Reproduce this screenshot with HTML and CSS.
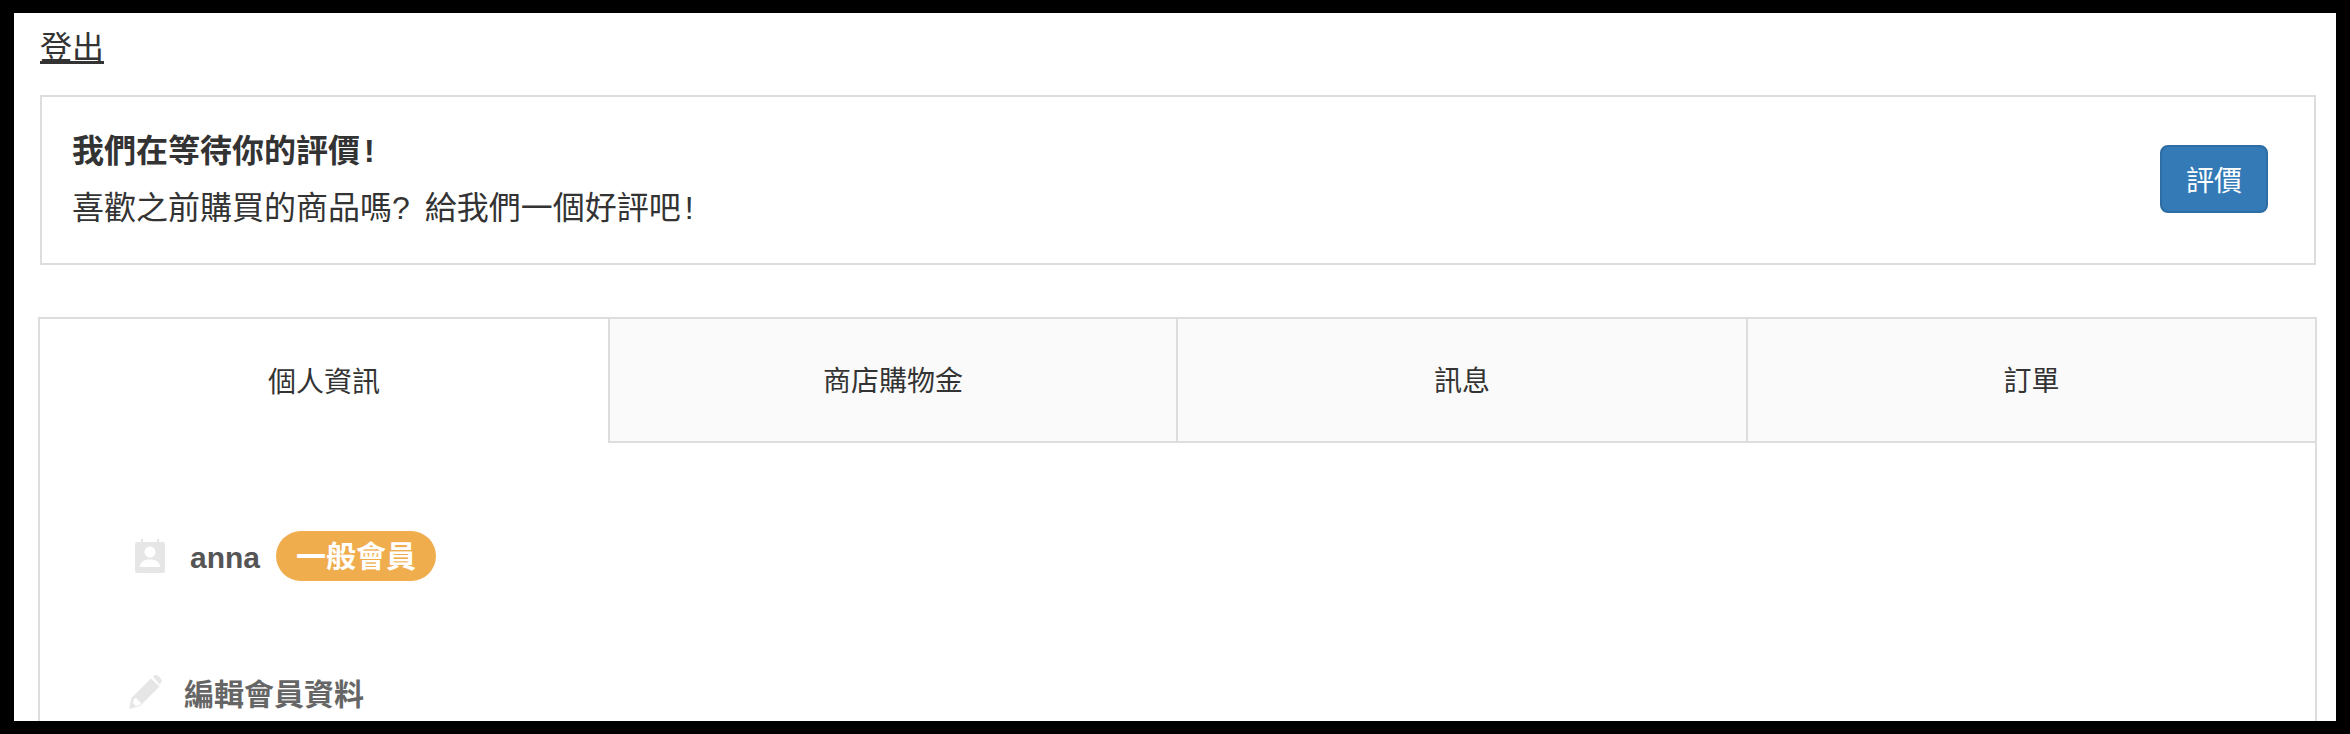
FILE: index.html
```html
<!DOCTYPE html>
<html lang="zh-TW">
<head>
    <meta charset="UTF-8">
    <title>會員中心</title>
    <link rel="stylesheet" href="styles.css">
</head>
<body>
    <div class="page">
        <a class="logout" href="#">登出</a>

        <div class="review-card">
            <div class="review-text">
                <h4>我們在等待你的評價<span class="bang">!</span></h4>
                <p>喜歡之前購買的商品嗎? 給我們一個好評吧<span class="bang">!</span></p>
            </div>
            <button class="btn-review">評價</button>
        </div>

        <div class="tabs-box">
            <div class="tabs">
                <div class="tab active">個人資訊</div>
                <div class="tab">商店購物金</div>
                <div class="tab">訊息</div>
                <div class="tab">訂單</div>
            </div>

            <div class="tab-body">
                <div class="member-row">
                    <svg class="icon-contact" viewBox="0 0 30 34">
                        <path fill="#e6e6e6" d="M6 0h2v3h14V0h2v3h4a2 2 0 0 1 2 2v27a2 2 0 0 1-2 2H2a2 2 0 0 1-2-2V5a2 2 0 0 1 2-2h4z"/>
                        <circle fill="#fff" cx="15" cy="13" r="5.5"/>
                        <path fill="#fff" d="M5 28c0-5 4-7.500 10-7.500S25 23 25 28z"/>
                    </svg>
                    <span class="member-name">anna</span>
                    <span class="badge">一般會員</span>
                </div>

                <div class="edit-row">
                    <svg class="icon-pencil" viewBox="0 0 33 34">
                        <path fill="#e6e6e6" d="M24 1.500l2-1.500q2-.5 4 1.500l2 2.500q1.500 2 0 4l-1.500 1.500zM22 3.500l8.500 8L11 31 0 34l2.500-11z"/>
                        <path fill="#fff" d="M5 24l2-1 5 5-1 2-4 1-3-3z"/>
                    </svg>
                    <span class="edit-label">編輯會員資料</span>
                </div>
            </div>
        </div>
    </div>
</body>
</html>
```

FILE: styles.css
```css
* {
    margin: 0;
    padding: 0;
    box-sizing: border-box;
}

html, body {
    height: 734px;
    overflow: hidden;
}

body {
    background: #000;
    padding: 13px 14px;
    font-family: "Liberation Sans", "Noto Sans CJK TC", sans-serif;
    color: #333;
}

.page {
    background: #fff;
    height: 708px;
    overflow: hidden;
    padding: 15px 19px 0 26px;
}

.logout {
    display: block;
    width: 64px;
    font-size: 32px;
    line-height: 40px;
    color: #333;
    text-decoration: underline;
}

.review-card {
    display: flex;
    align-items: center;
    justify-content: space-between;
    height: 170px;
    margin-top: 27px;
    margin-right: 1px;
    padding: 0 46px 0 30px;
    border: 2px solid #ddd;
}

.review-text h4 {
    font-size: 32px;
    line-height: 57px;
    font-weight: bold;
}

.review-text p {
    font-size: 32px;
    line-height: 57px;
    word-spacing: 6px;
}

.bang {
    margin-left: 4px;
}

.btn-review {
    width: 108px;
    height: 68px;
    margin-bottom: 2px;
    background: #337ab7;
    border: 2px solid #2e6da4;
    border-radius: 8px;
    color: #fff;
    font-family: inherit;
    font-size: 28px;
}

.tabs-box {
    margin-top: 52px;
    margin-left: -2px;
    height: 500px;
    border: 2px solid #ddd;
}

.tabs {
    display: grid;
    grid-template-columns: 568px 568px 570px 1fr;
    height: 124px;
}

.tab {
    display: flex;
    align-items: center;
    justify-content: center;
    padding-bottom: 2px;
    background: #fafafa;
    border-left: 2px solid #ddd;
    border-bottom: 2px solid #ddd;
    font-size: 28px;
}

.tab.active {
    background: #fff;
    border-left: none;
    border-bottom: none;
}

.tab-body {
    padding: 88px 0 0 90px;
}

.member-row {
    display: flex;
    align-items: center;
    height: 50px;
}

.icon-contact {
    width: 30px;
    height: 34px;
    margin-left: 5px;
}

.member-name {
    margin-left: 25px;
    padding-top: 3px;
    font-size: 30px;
    font-weight: bold;
    color: #555;
}

.badge {
    margin-left: 16px;
    padding: 0 20px;
    height: 50px;
    line-height: 51px;
    border-radius: 25px;
    background: #f0ad4e;
    color: #fff;
    font-size: 30px;
    font-weight: bold;
}

.edit-row {
    display: flex;
    align-items: center;
    margin-top: 89px;
}

.icon-pencil {
    width: 33px;
    height: 34px;
    margin-left: -1px;
}

.edit-label {
    margin-left: 22px;
    font-size: 30px;
    font-weight: bold;
    color: #666;
}
```
